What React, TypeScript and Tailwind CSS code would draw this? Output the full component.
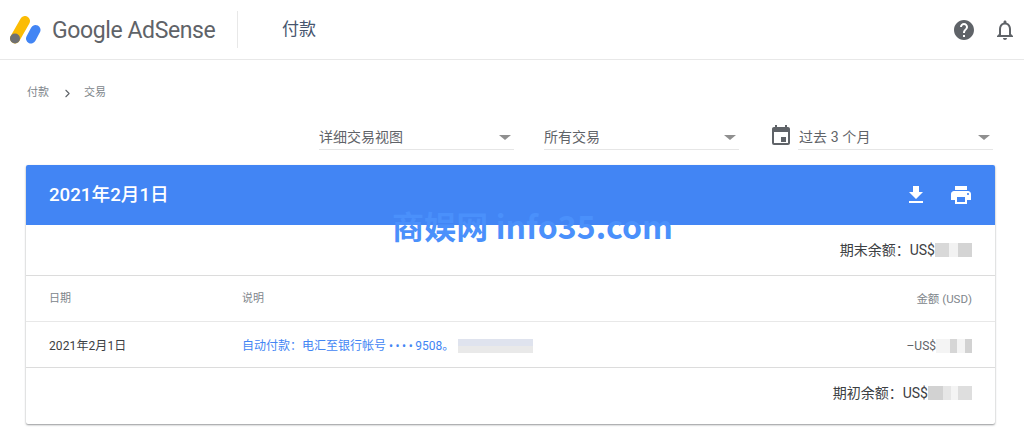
import { ChevronRight } from 'lucide-react'

const font = 'font-["Roboto","Noto_Sans_CJK_SC",sans-serif]'

function Logo() {
  return (
    <svg width="32" height="28" viewBox="0 0 32 28">
      <line x1="15" y1="5" x2="5" y2="22.5" stroke="#fbbc04" strokeWidth="10" strokeLinecap="round" />
      <circle cx="5" cy="22.5" r="5" fill="#6f7072" />
      <line x1="25.5" y1="14" x2="21" y2="22.5" stroke="#4285f4" strokeWidth="10" strokeLinecap="round" />
    </svg>
  )
}

function Caret() {
  return <span className="w-0 h-0 border-x-[6px] border-x-transparent border-t-[5px] border-t-[#8f8f8f]" />
}

function Select({ label, className }: { label: string; className: string }) {
  return (
    <div className={`h-[25px] flex items-center justify-between border-b border-[#e6e6e6] text-sm text-[#5f6368] pt-[1px] ${className}`}>
      <span>{label}</span>
      <span className="mr-[3px] flex">
        <Caret />
      </span>
    </div>
  )
}

function Smudge({ parts }: { parts: [number, string][] }) {
  return (
    <span className="inline-flex h-[14px]">
      {parts.map(([w, c], i) => (
        <span key={i} className="h-full" style={{ width: w, background: c }} />
      ))}
    </span>
  )
}

export default function App() {
  return (
    <div className={`w-[1024px] h-[436px] relative overflow-hidden bg-white ${font}`}>
      <header className="h-[60px] flex items-center border-b border-[#e8e8e8] pl-[10px] pr-[7px]">
        <Logo />
        <span className="ml-[10px] mt-[3px] w-[163px] text-[23px] tracking-[-0.4px] text-[#5f6368] whitespace-nowrap">Google AdSense</span>
        <span className="ml-[22px] w-px h-[37px] bg-[#e8e8e8]" />
        <span className="ml-[44px] text-[17px] text-[#46556e]">付款</span>
        <span className="ml-auto flex items-center gap-[17px]">
          <svg width="24" height="24" viewBox="0 0 24 24" fill="#5f6368">
            <path d="M12 2C6.48 2 2 6.48 2 12s4.48 10 10 10 10-4.48 10-10S17.52 2 12 2zm1 17h-2v-2h2v2zm2.07-7.75l-.9.92C13.45 12.9 13 13.5 13 15h-2v-.5c0-1.1.45-2.1 1.17-2.83l1.24-1.26c.37-.36.59-.86.59-1.41 0-1.1-.9-2-2-2s-2 .9-2 2H8c0-2.21 1.79-4 4-4s4 1.79 4 4c0 .88-.36 1.68-.93 2.25z" />
          </svg>
          <svg width="24" height="24" viewBox="0 0 24 24" fill="#5f6368">
            <path d="M12 22c1.1 0 2-.9 2-2h-4c0 1.1.89 2 2 2zm6-6v-5c0-3.07-1.64-5.64-4.5-6.32V4c0-.83-.67-1.5-1.5-1.5s-1.5.67-1.5 1.5v.68C7.63 5.36 6 7.92 6 11v5l-2 2v1h16v-1l-2-2zm-2 1H8v-6c0-2.48 1.51-4.5 4-4.5s4 2.02 4 4.5v6z" />
          </svg>
        </span>
      </header>

      <nav className="h-[20px] mt-[23px] ml-[27px] flex items-center text-[11px] text-[#80868b]">
        <span>付款</span>
        <ChevronRight size={13} className="ml-[12px] text-[#5f6368]" />
        <span className="ml-[10px]">交易</span>
      </nav>

      <div className="mt-[21px] ml-[319px] flex items-center">
        <Select label="详细交易视图" className="w-[195px]" />
        <Select label="所有交易" className="w-[195px] ml-[30px]" />
        <svg className="ml-[30px] mb-[2px]" width="24" height="24" viewBox="0 0 24 24" fill="#5f6368">
          <path d="M19 3h-1V1h-2v2H8V1H6v2H5c-1.11 0-2 .9-2 2v14a2 2 0 0 0 2 2h14c1.1 0 2-.9 2-2V5c0-1.1-.9-2-2-2zm0 16H5V8h14v11zM12 13h5v5h-5z" />
        </svg>
        <Select label="过去 3 个月" className="w-[195px] ml-[5px] pl-px tracking-[0.1px]" />
      </div>

      <section className="mt-[15px] mx-[26px] w-[969px] h-[259px] rounded-[2px] bg-white shadow-[0_1px_2px_rgba(60,64,67,0.55)]">
        <div className="h-[60px] bg-[#4285f4] rounded-t-[2px] flex items-center pl-[23px] pr-[22px] text-white">
          <span className="text-[18.7px] font-medium">2021年2月1日</span>
          <svg className="ml-auto" width="24" height="24" viewBox="0 0 24 24" fill="#ffffff">
            <path d="M19 9h-4V3H9v6H5l7 7 7-7zM5 18v2h14v-2H5z" />
          </svg>
          <svg className="ml-[21px]" width="24" height="24" viewBox="0 0 24 24" fill="#ffffff">
            <path d="M19 8H5c-1.66 0-3 1.34-3 3v6h4v4h12v-4h4v-6c0-1.66-1.34-3-3-3zm-3 11H8v-5h8v5zm3-7c-.55 0-1-.45-1-1s.45-1 1-1 1 .45 1 1-.45 1-1 1zm-1-9H6v4h12V3z" />
          </svg>
        </div>

        <div className="h-[51px] flex items-center justify-end pr-[23px] border-b border-[#dcdcdc] text-sm text-[#3c4043]">
          <span>期末余额：US$</span>
          <Smudge parts={[[14, '#d8d8d8'], [9, '#f2f2f2'], [14, '#d4d4d4']]} />
        </div>

        <div className="h-[46px] flex items-center pl-[23px] pr-[23px] pt-[2px] border-b border-[#e8e8e8] text-[11px] text-[#80868b]">
          <span className="w-[193px]">日期</span>
          <span>说明</span>
          <span className="ml-auto text-[11.5px]">金额 (USD)</span>
        </div>

        <div className="h-[46px] flex items-center pl-[23px] pr-[23px] pt-[2px] border-b border-[#dcdcdc] text-xs text-[#3c4043]">
          <span className="w-[193px] tracking-[0.1px]">2021年2月1日</span>
          <span className="text-[#4285f4]">
            自动付款：电汇至银行帐号 <span className="tracking-[2.5px]">••••</span>9508。
          </span>
          <span className="ml-[4px] flex">
            <Smudge parts={[[75, 'linear-gradient(#dfe3ee 50%, #e9e9e9 50%)']]} />
          </span>
          <span className="ml-auto text-[#5f6368]">–US$</span>
          <Smudge parts={[[14, '#f4f4f4'], [7, '#d6d6d6'], [8, '#f4f4f4'], [7, '#d2d2d2']]} />
        </div>

        <div className="h-[49px] flex items-center justify-end pr-[23px] text-sm text-[#3c4043]">
          <span>期初余额：US$</span>
          <Smudge parts={[[15, '#d2d2d2'], [8, '#e6e6e6'], [7, '#f4f4f4'], [14, '#dedede']]} />
        </div>
      </section>

      <div className="absolute left-[392px] top-[205px] text-[32px] leading-[40px] font-bold tracking-[0.1px] text-[#4a90fb] whitespace-nowrap font-['Noto_Sans_CJK_SC',sans-serif]">
        商娱网 info35.com
      </div>
    </div>
  )
}
